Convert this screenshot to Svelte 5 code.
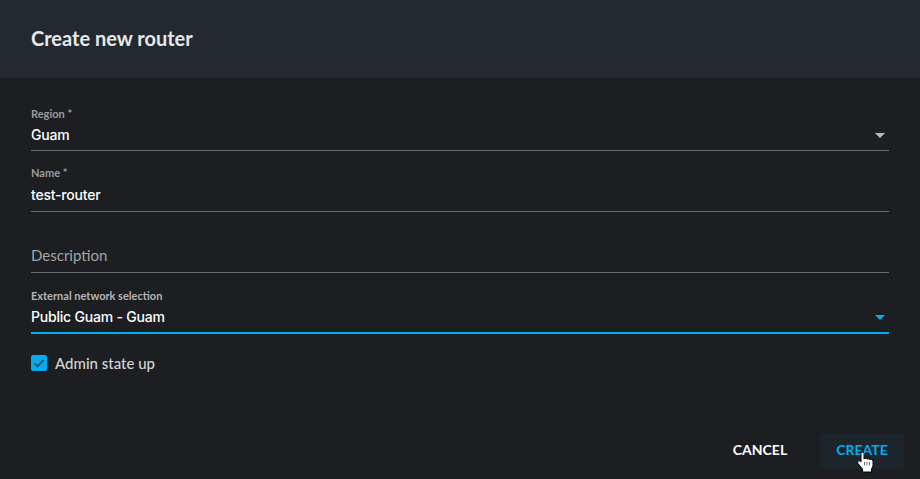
<script lang="ts">
  let adminUp = $state(true);
  let region = $state('Guam');
  let name = $state('test-router');
  let network = $state('Public Guam - Guam');
</script>

<div class="dialog">
  <header class="dialog-header">
    <h2>Create new router</h2>
  </header>

  <div class="dialog-body">
    <div class="field select region">
      <span class="label">Region *</span>
      <div class="value">{region}<span class="caret"></span></div>
    </div>

    <div class="field name">
      <span class="label">Name *</span>
      <div class="value">{name}</div>
    </div>

    <div class="field description">
      <div class="placeholder">Description</div>
    </div>

    <div class="field select network focused">
      <span class="label">External network selection</span>
      <div class="value">{network}<span class="caret"></span></div>
    </div>

    <button class="checkbox" onclick={() => (adminUp = !adminUp)}>
      <span class="box" class:checked={adminUp}>
        {#if adminUp}
          <svg viewBox="0 0 16 16" width="16" height="16">
            <path d="M3.400 8.200l3.100 3.100 6-6.400" fill="none" stroke="#2b3a45" stroke-width="1.500" />
          </svg>
        {/if}
      </span>
      <span class="checkbox-label">Admin state up</span>
    </button>
  </div>

  <footer class="dialog-actions">
    <button class="btn">CANCEL</button>
    <button class="btn primary">
      CREATE
      <svg class="cursor" viewBox="0 0 18 22" width="18" height="22">
        <path
          d="M4 2.500C4 .7 7 .7 7 2.500V8C7.500 7 9.500 7 10 8.200 10.500 7.400 12.200 7.500 12.700 8.700 13.500 8.200 16 8.500 16 10.500V15L14.500 18V21H5.500V18L1 12.500C-.2 10.500 2 9 3.200 10.200L4 11Z"
          fill="#fff"
          stroke="#000"
          stroke-width="1"
        />
        <path d="M7.500 11v3.500M10 11v3.500M12.500 11v3.500" stroke="#444" stroke-width=".8" fill="none" />
      </svg>
    </button>
  </footer>
</div>

<style>
  :global(body) {
    margin: 0;
    background: #1c1d21;
  }

  .dialog {
    width: 920px;
    height: 479px;
    display: flex;
    flex-direction: column;
    background: #1c1e22;
    color: #fff;
    font-family: Lato, 'Liberation Sans', sans-serif;
    overflow: hidden;
  }

  .dialog-header {
    height: 78px;
    flex-shrink: 0;
    display: flex;
    align-items: center;
    padding: 0 31px 2px;
    background: #242930;
    box-sizing: border-box;
  }

  h2 {
    margin: 0;
    font-size: 20px;
    font-weight: 700;
    color: #e6e8ea;
  }

  .dialog-body {
    flex: 1;
    padding: 29px 31px 0;
    display: flex;
    flex-direction: column;
  }

  .field {
    border-bottom: 1px solid #6a6b6f;
    box-sizing: border-box;
    display: flex;
    flex-direction: column;
  }

  .region {
    height: 44px;
  }

  .name {
    height: 49px;
    margin-top: 12px;
    padding-top: 3px;
  }

  .description {
    height: 49px;
    margin-top: 12px;
    justify-content: flex-end;
  }

  .network {
    height: 50px;
    margin-top: 11px;
    padding-top: 5px;
  }

  .focused {
    border-bottom: 2px solid #00aeef;
  }

  .label {
    font-size: 11px;
    line-height: 13px;
    font-weight: 700;
    color: #9b9c9f;
  }

  .network .label {
    color: #b4b5b7;
  }

  .value {
    margin-top: 6px;
    font-family: Inter, Lato, sans-serif;
    font-size: 14px;
    line-height: 18px;
    font-weight: 500;
    letter-spacing: -0.2px;
    color: #fff;
    position: relative;
  }

  .name .value {
    margin-top: 7px;
  }

  .placeholder {
    font-size: 15px;
    line-height: 18px;
    padding-bottom: 8px;
    color: #a4a5a8;
  }

  .caret {
    position: absolute;
    right: 4px;
    top: 7px;
    width: 0;
    height: 0;
    border-left: 5px solid transparent;
    border-right: 5px solid transparent;
    border-top: 5px solid #b9babc;
  }

  .focused .caret {
    border-top-color: #00aeef;
  }

  .checkbox {
    display: flex;
    align-items: center;
    gap: 8px;
    margin-top: 20px;
    padding: 0;
    background: none;
    border: none;
    font: inherit;
    color: inherit;
    cursor: pointer;
  }

  .box {
    width: 16px;
    height: 16px;
    border-radius: 2px;
    box-sizing: border-box;
    border: 1px solid #8a8b8e;
  }

  .box.checked {
    background: #00aeef;
    border: none;
  }

  .box svg {
    display: block;
  }

  .checkbox-label {
    font-size: 15px;
    line-height: 18px;
    font-weight: 500;
    color: #d5d6d8;
  }

  .dialog-actions {
    display: flex;
    justify-content: flex-end;
    padding: 0 16px 10px;
  }

  .btn {
    width: 84px;
    height: 36px;
    padding: 0 0 3px;
    border: none;
    border-radius: 4px;
    background: none;
    color: #fff;
    font: inherit;
    font-size: 14px;
    font-weight: 700;
    position: relative;
    cursor: pointer;
  }

  .btn.primary {
    margin-left: 18px;
    background: #1c252c;
    color: #00aeef;
  }

  .cursor {
    position: absolute;
    left: 37px;
    top: 18px;
  }
</style>
